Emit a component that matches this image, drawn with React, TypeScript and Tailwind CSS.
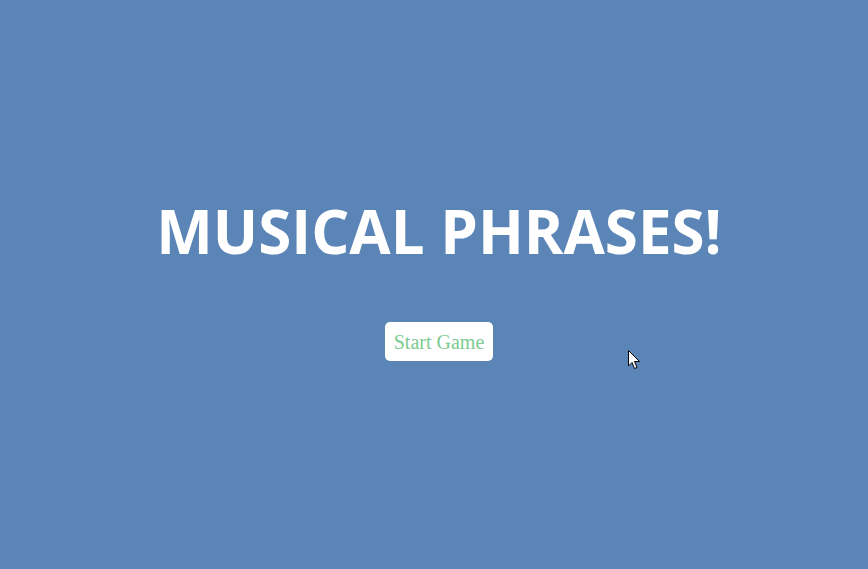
import React from "react";

export default function App() {
  return (
    <div className="relative w-full h-[569px] bg-[#5b85b7] overflow-hidden flex flex-col items-center pl-[10px]">
      <h1 className="pt-[190px] text-[60px] leading-[82px] font-bold text-white" style={{ fontFamily: '"Open Sans", sans-serif' }}>
        MUSICAL PHRASES!
      </h1>
      <button
        className="mt-[50px] h-[39px] px-[9px] bg-white rounded-[5px] text-[20px] text-[#7dcb93] flex items-center justify-center"
        style={{ fontFamily: '"Liberation Serif", serif' }}
      >
        Start Game
      </button>
      <svg className="absolute left-[628px] top-[350px]" width="13" height="20" viewBox="0 0 13 20">
        <path d="M0.5 0.5 L0.5 16 L4 12.5 L6.5 18.5 L9 17.5 L6.5 11.5 L11.5 11.5 Z" fill="white" stroke="black" strokeWidth="1" strokeLinejoin="miter" />
      </svg>
    </div>
  );
}
